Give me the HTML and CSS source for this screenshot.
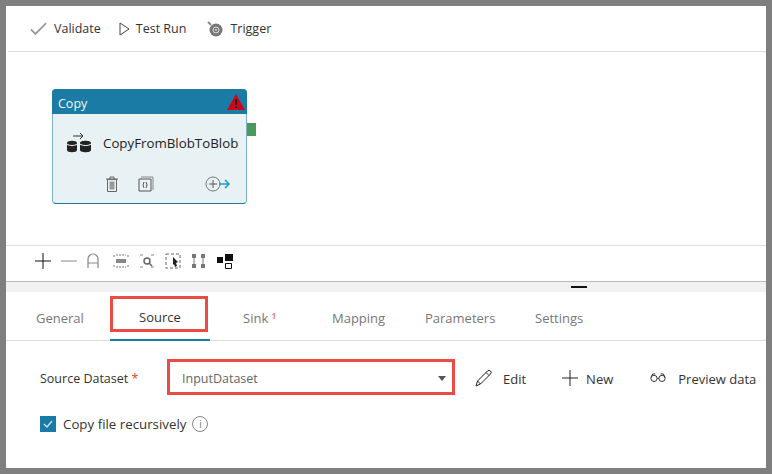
FILE: index.html
```html
<!DOCTYPE html>
<html>
<head>
    <title>Copy pipeline</title>
    <link rel="stylesheet" href="styles.css">
</head>
<body>
    <div class="frame">
        <div class="toolbar">
            <span class="tool tool-validate">
                <svg width="18" height="15" viewBox="0 0 20 16"><path d="M1 9l5 5L18 2" fill="none" stroke="#999" stroke-width="2"/></svg>
                Validate
            </span>
            <span class="tool tool-run">
                <svg width="11" height="14" viewBox="0 0 11 14"><path d="M1 1l9 6-9 6z" fill="none" stroke="#444"/></svg>
                Test Run
            </span>
            <span class="tool">
                <svg width="18" height="18" viewBox="0 0 18 18"><path d="M2 2l3 3" stroke="#888" stroke-width="2"/><circle cx="10" cy="10" r="6.5" fill="#777"/><circle cx="10" cy="10" r="3" fill="none" stroke="#ddd"/><circle cx="10" cy="10" r="1" fill="#ddd"/></svg>
                Trigger
            </span>
        </div>

        <div class="canvas">
            <div class="node">
                <div class="node-head">
                    <span class="node-kind">Copy</span>
                    <svg class="warn" width="18" height="16" viewBox="0 0 18 16"><path d="M9 0l9 16H0z" fill="#d0021b"/><path d="M8 5h2v6H8zM8 12h2v2H8z" fill="#1f1f1f"/></svg>
                </div>
                <div class="node-body">
                    <div class="node-title">
                        <svg width="26" height="22" viewBox="0 0 26 22"><path d="M7 4h10M14 1l3 3-3 3" fill="none" stroke="#333"/><path d="M1 11c0-3 10-3 10 0v7c0 3-10 3-10 0zM14 11c0-3 11-3 11 0v7c0 3-11 3-11 0z" fill="#222"/><path d="M1 12c2 2 8 2 10 0M14 12c2 2 9 2 11 0" fill="none" stroke="#fff"/></svg>
                        <span>CopyFromBlobToBlob</span>
                    </div>
                    <div class="node-actions">
                        <svg class="act-del" width="14" height="16" viewBox="0 0 14 16"><path d="M1 3h12M5 3V1h4v2M2.500 3.500h9v12h-9z" fill="none" stroke="#666"/><path d="M4.500 5.500h5v8h-5z" fill="#999"/></svg>
                        <svg class="act-code" width="16" height="16" viewBox="0 0 16 16"><path d="M3 1h12v13" fill="none" stroke="#888"/><path d="M1 3h12v12H1z" fill="#e8f0f3" stroke="#555"/><path d="M6 6L5 9l1 3M8 6l1 3-1 3" fill="none" stroke="#555"/></svg>
                        <svg class="act-add" width="26" height="16" viewBox="0 0 26 16"><circle cx="8" cy="8" r="7" fill="none" stroke="#777"/><path d="M4 8h8M8 4v8" stroke="#555"/><path d="M14 8h10M20 4l4 4-4 4" fill="none" stroke="#1b9ad6" stroke-width="1.500"/></svg>
                    </div>
                </div>
                <span class="node-port"></span>
            </div>
        </div>

        <div class="zoombar">
            <svg width="16" height="16" viewBox="0 0 16 16"><path d="M0 8h16M8 0v16" stroke="#111"/></svg>
            <svg width="16" height="16" viewBox="0 0 16 16"><path d="M0 8h16" stroke="#888"/></svg>
            <svg class="zoom-lock" width="12" height="16" viewBox="0 0 12 16"><path d="M1 15V6a5 5 0 0 1 10 0v9M1 10h10" fill="none" stroke="#888" stroke-width="1.200"/></svg>
            <svg width="16" height="14" viewBox="0 0 16 14"><path d="M1 1v2M15 1v2M1 11v2M15 11v2M3 1h10M3 13h10" stroke="#777" stroke-dasharray="2 1"/><path d="M3 5h10v4H3z" fill="#888"/></svg>
            <svg width="16" height="14" viewBox="0 0 16 14"><path d="M1 1h3M1 13h3M12 1h3M12 13h3" stroke="#888"/><circle cx="8" cy="7" r="3" fill="none" stroke="#666" stroke-width="1.500"/><path d="M10 9l3 3" stroke="#666" stroke-width="1.500"/></svg>
            <svg width="16" height="16" viewBox="0 0 16 16"><path d="M1 1h14v14H1z" fill="none" stroke="#666" stroke-dasharray="3 2"/><path d="M8 4l5 5-2 1 1 3-2 1-1-3-1 1z" fill="#222"/></svg>
            <svg class="zoom-tree" width="15" height="16" viewBox="0 0 15 16"><path d="M1 1h4v4H1zM10 1h4v4h-4zM1 11h4v4H1zM10 11h4v4h-4z" fill="#777"/><path d="M3 5v6M12 5v6" stroke="#777"/></svg>
            <svg width="16" height="16" viewBox="0 0 16 16"><path d="M0 4h6v6H0zM8 1h8v7H8z" fill="#111"/><path d="M8.500 10.500h6v5h-6z" fill="none" stroke="#111"/></svg>
        </div>

        <div class="splitter"><span class="grip"></span></div>

        <div class="tabs">
            <span class="tab tab-general">General</span>
            <span class="tab tab-source">Source</span>
            <span class="tab tab-sink">Sink<sup>1</sup></span>
            <span class="tab tab-mapping">Mapping</span>
            <span class="tab tab-params">Parameters</span>
            <span class="tab">Settings</span>
        </div>

        <div class="panel">
            <div class="dataset-row">
                <label class="field-label">Source Dataset <em>*</em></label>
                <div class="select">
                    <span>InputDataset</span>
                    <span class="caret"></span>
                </div>
                <span class="action action-edit">
                    <svg width="18" height="18" viewBox="0 0 18 18"><path d="M1 17l1.500-5L12.500 2a2 2 0 0 1 3 3L5.500 15zM2.500 12l3 3M11 3.500l3 3" fill="none" stroke="#222"/></svg>
                    <span>Edit</span>
                </span>
                <span class="action action-new">
                    <svg width="16" height="16" viewBox="0 0 16 16"><path d="M0 8h16M8 0v16" stroke="#222"/></svg>
                    <span>New</span>
                </span>
                <span class="action action-preview">
                    <svg width="16" height="11" viewBox="0 0 18 12"><circle cx="4.500" cy="7" r="3.500" fill="none" stroke="#222"/><circle cx="13.500" cy="7" r="3.500" fill="none" stroke="#222"/><path d="M8 7h2M1 6l2-4h3M17 6l-2-4h-3" fill="none" stroke="#222"/></svg>
                    <span>Preview data</span>
                </span>
            </div>
            <div class="check-row">
                <span class="check">
                    <svg width="16" height="16" viewBox="0 0 16 16"><path d="M4 8l3 3 5-6" fill="none" stroke="#cfe6f2" stroke-width="1.300"/></svg>
                </span>
                <span class="check-text">Copy file recursively</span>
                <span class="info">i</span>
            </div>
        </div>
    </div>
</body>
</html>
```
FILE: styles.css
```css
html, body {
    margin: 0;
    padding: 0;
}
body {
    width: 772px;
    height: 474px;
    overflow: hidden;
    font-family: "Open Sans", "Noto Sans", sans-serif;
    font-size: 12.500px;
    color: #333;
}
.frame {
    box-sizing: border-box;
    width: 772px;
    height: 474px;
    background-color: white;
    border: 6px solid #7f7f7f;
    display: flex;
    flex-direction: column;
    overflow: hidden;
}
.toolbar {
    height: 46px;
    box-sizing: border-box;
    margin-left: 2px;
    padding-left: 22px;
    border-bottom: 1px solid #ddd;
    display: flex;
    align-items: center;
}
.tool {
    display: flex;
    align-items: center;
    gap: 6px;
}
.tool-validate {
    margin-right: 18px;
}
.tool-run {
    margin-right: 20px;
}
.canvas {
    position: relative;
    height: 194px;
    box-sizing: border-box;
    border-bottom: 1px solid #ddd;
}
.node {
    position: absolute;
    left: 46px;
    top: 37px;
    width: 195px;
    height: 115px;
    box-sizing: border-box;
    border: 1px solid #7db2c9;
    border-bottom-color: #1a7aa3;
    border-radius: 4px;
    background-color: #e8f1f4;
}
.node-head {
    height: 24px;
    margin: -1px -1px 0;
    padding: 1px 2px 0 6px;
    box-sizing: content-box;
    background-color: #1a7ba5;
    border-radius: 4px 4px 0 0;
    color: #f2f7f9;
    display: flex;
    align-items: center;
    justify-content: space-between;
}
.node-kind {
    padding-top: 2px;
}
.node-body {
    padding: 18px 0 0 13px;
}
.node-title {
    display: flex;
    align-items: center;
    gap: 11px;
    color: #222;
    font-size: 13.300px;
}
.node-actions {
    display: flex;
    align-items: center;
    margin: 22px 0 0 39px;
}
.act-del {
    margin-right: 19px;
}
.act-code {
    margin-right: 51px;
}
.node-port {
    position: absolute;
    right: -10px;
    top: 33px;
    width: 9px;
    height: 13px;
    background-color: #4c9a5b;
}
.zoombar {
    height: 35px;
    box-sizing: border-box;
    padding: 0 0 5px 29px;
    display: flex;
    align-items: center;
    gap: 10px;
}
.zoom-lock {
    margin-right: 4px;
}
.zoom-tree {
    margin-right: 1px;
}
.splitter {
    position: relative;
    height: 11px;
    box-sizing: border-box;
    background-color: #f1f1f1;
    border-top: 1px solid #bbb;
}
.grip {
    position: absolute;
    left: 565px;
    top: 4px;
    width: 16px;
    height: 2px;
    background-color: #111;
}
.tabs {
    height: 49px;
    box-sizing: border-box;
    padding: 0 0 0 30px;
    border-bottom: 1px solid #ddd;
    display: flex;
    color: #777;
    font-size: 13px;
}
.tab {
    display: flex;
    align-items: center;
    height: 49px;
    padding-top: 2px;
    box-sizing: border-box;
}
.tab-general {
    width: 74px;
}
.tab-source {
    position: relative;
    width: 100px;
    justify-content: center;
    color: #333;
    border-bottom: 2px solid #1a7ba5;
    margin-right: 33px;
}
.tab-source::after {
    content: "";
    position: absolute;
    left: 0;
    top: 4px;
    width: 92px;
    height: 30px;
    border: 3px solid #ea4b45;
}
.tab-sink {
    width: 89px;
}
.tab-sink sup {
    font-size: 9px;
    font-weight: 700;
    color: #e58a98;
    line-height: 0;
    margin-left: 3px;
    position: relative;
    top: -2px;
}
.tab-mapping {
    width: 93px;
}
.tab-params {
    width: 110px;
}
.panel {
    padding: 18px 0 0 34px;
}
.dataset-row {
    display: flex;
    align-items: center;
    height: 36px;
}
.field-label {
    width: 127px;
    flex: none;
    padding-top: 3px;
}
.field-label em {
    color: #e0492f;
    font-style: normal;
}
.select {
    width: 288px;
    height: 36px;
    box-sizing: border-box;
    border: 3px solid #ea4b45;
    flex: none;
    padding: 3px 6px 0 12px;
    color: #666;
    display: flex;
    align-items: center;
    justify-content: space-between;
}
.action {
    display: flex;
    align-items: center;
    gap: 10px;
    font-size: 13px;
}
.action svg {
    margin-top: 1px;
}
.action span {
    padding-top: 3px;
}
.action-edit {
    margin-left: 20px;
    margin-right: 36px;
}
.action-new {
    gap: 8px;
    margin-right: 37px;
}
.action-preview {
    gap: 12px;
}
.caret {
    border: 4px solid transparent;
    border-top: 5px solid #555;
    border-bottom: 0;
}
.check-row {
    display: flex;
    align-items: center;
    margin-top: 20px;
    height: 18px;
}
.check {
    width: 16px;
    height: 16px;
    background-color: #1a7ba5;
    margin-right: 7px;
}
.check-text {
    font-size: 13.300px;
}
.info {
    box-sizing: border-box;
    width: 16px;
    height: 16px;
    margin-left: 6px;
    border: 1px solid #888;
    border-radius: 50%;
    color: #777;
    font-size: 10px;
    line-height: 14px;
    text-align: center;
}
```
